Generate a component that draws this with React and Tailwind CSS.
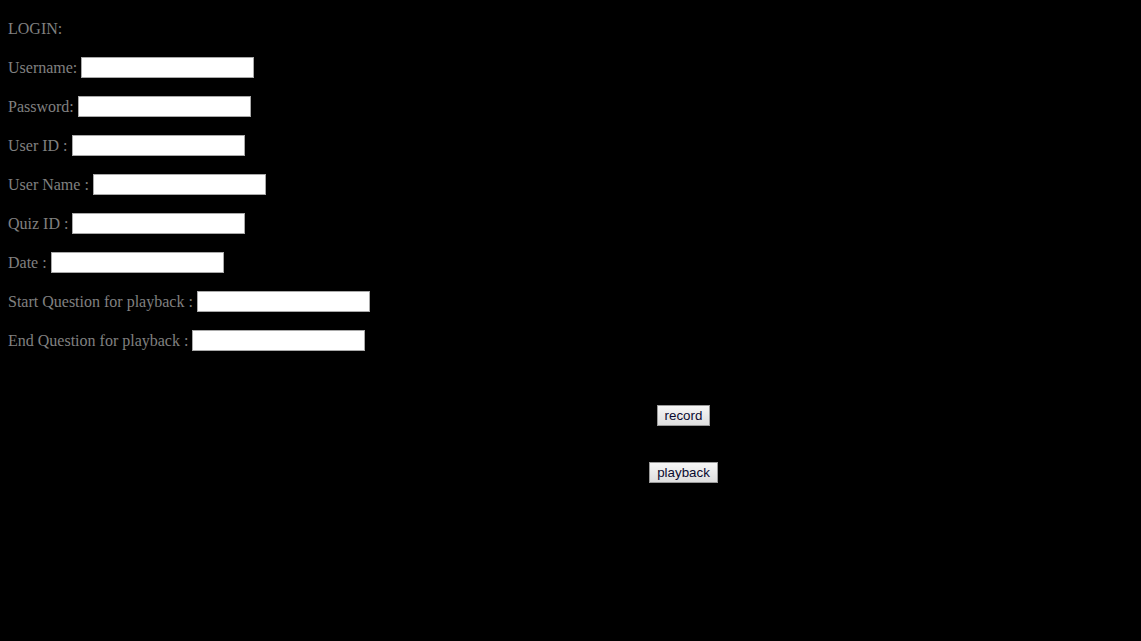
export default function App() {
  const rows = [
    "Username:",
    "Password:",
    "User ID :",
    "User Name :",
    "Quiz ID :",
    "Date :",
    "Start Question for playback :",
    "End Question for playback :",
  ];
  return (
    <div className="w-[1141px] h-[641px] bg-black overflow-hidden text-[#808080] text-[16px]" style={{ fontFamily: '"Liberation Serif", "Times New Roman", serif' }}>
      <div className="pl-[8px] pt-[17px] flex flex-col gap-[16px]">
        <div className="h-[23px] flex items-center">LOGIN:</div>
        {rows.map((r) => (
          <div key={r} className="h-[23px] flex items-center gap-[4px]">
            <span>{r}</span>
            <input className="w-[173px] h-[21px] bg-white border border-[#a9a9a9] outline-none" />
          </div>
        ))}
      </div>
      <div className="pl-[226px] pt-[53px] flex flex-col items-center gap-[36px]" style={{ fontFamily: '"Liberation Sans", Arial, sans-serif' }}>
        <button className="h-[21px] px-[7px] text-[13.33px] text-[#0a0a30] bg-gradient-to-b from-[#f6f6f6] to-[#dedede] border border-[#9a9a9a] leading-none">record</button>
        <button className="h-[21px] px-[7px] text-[13.33px] text-[#0a0a30] bg-gradient-to-b from-[#f6f6f6] to-[#dedede] border border-[#9a9a9a] leading-none">playback</button>
      </div>
    </div>
  );
}
